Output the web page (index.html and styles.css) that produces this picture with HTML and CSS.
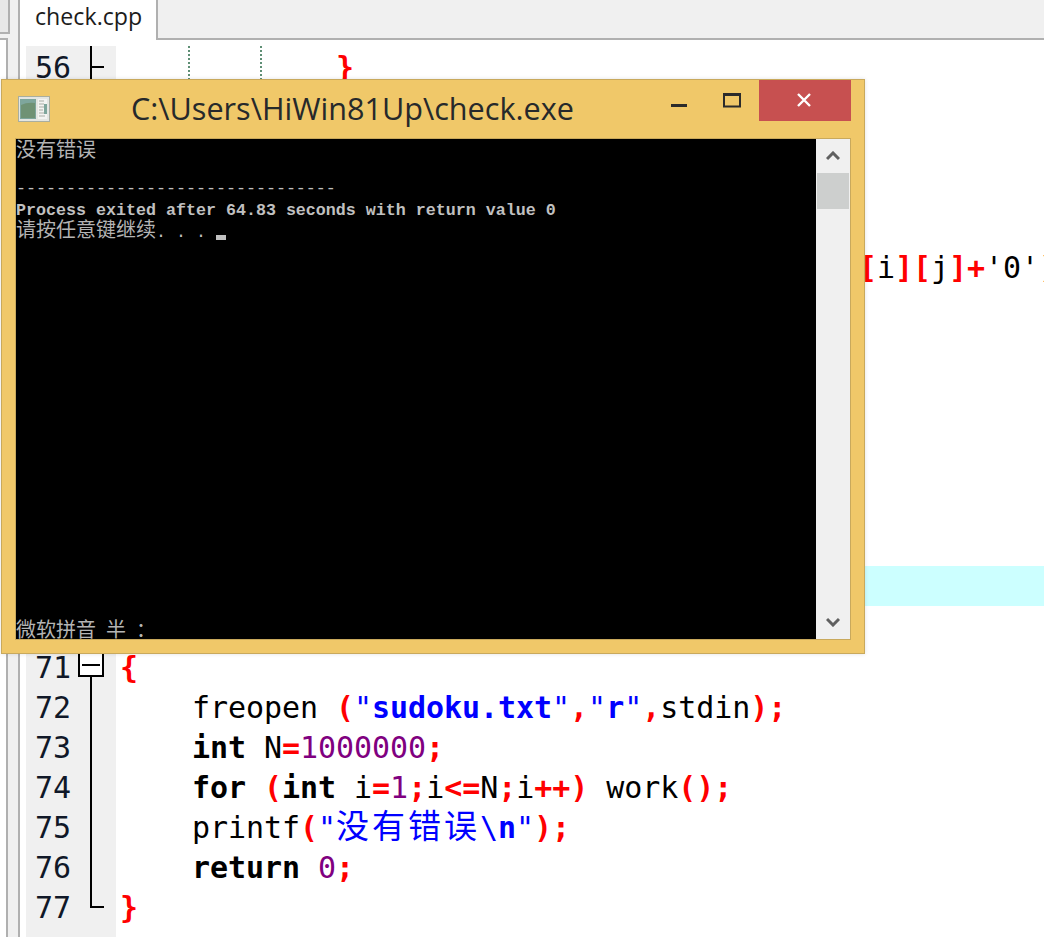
FILE: index.html
```html
<!DOCTYPE html>
<html lang="zh">
<head>
<meta charset="utf-8">
<title>check.cpp</title>
<link rel="stylesheet" href="styles.css">
</head>
<body>
<div class="ide">
  <aside class="left">
    <div class="pane-top"></div>
    <div class="pane-bottom"></div>
  </aside>
  <main class="main">
    <div class="tabbar">
      <div class="tab">check.cpp</div>
      <div class="tab-rest"></div>
    </div>
    <div class="editor">
      <div class="row"><div class="gutter"><span class="num">56</span><span class="fold f-tick"></span></div><div class="code guided"><span class="guide g1"></span><span class="guide g2"></span>            <b class="op">}</b></div></div>
      <div class="row"><div class="gutter"><span class="num">57</span><span class="fold f-line"></span></div><div class="code"></div></div>
      <div class="row"><div class="gutter"><span class="num">58</span><span class="fold f-line"></span></div><div class="code"></div></div>
      <div class="row"><div class="gutter"><span class="num">59</span><span class="fold f-line"></span></div><div class="code"></div></div>
      <div class="row"><div class="gutter"><span class="num">60</span><span class="fold f-line"></span></div><div class="code"></div></div>
      <div class="row"><div class="gutter"><span class="num">61</span><span class="fold f-line"></span></div><div class="code shifted"><b class="op">[</b>i<b class="op">][</b>j<b class="op">]+</b>'0'<b class="op">);</b></div></div>
      <div class="row"><div class="gutter"><span class="num">62</span><span class="fold f-line"></span></div><div class="code"></div></div>
      <div class="row"><div class="gutter"><span class="num">63</span><span class="fold f-line"></span></div><div class="code"></div></div>
      <div class="row"><div class="gutter"><span class="num">64</span><span class="fold f-line"></span></div><div class="code"></div></div>
      <div class="row"><div class="gutter"><span class="num">65</span><span class="fold f-line"></span></div><div class="code"></div></div>
      <div class="row"><div class="gutter"><span class="num">66</span><span class="fold f-line"></span></div><div class="code"></div></div>
      <div class="row"><div class="gutter"><span class="num">67</span><span class="fold f-line"></span></div><div class="code"></div></div>
      <div class="row"><div class="gutter"><span class="num">68</span><span class="fold f-line"></span></div><div class="code"></div></div>
      <div class="row"><div class="gutter"><span class="num">69</span><span class="fold f-line"></span></div><div class="code current"></div></div>
      <div class="row"><div class="gutter"><span class="num">70</span><span class="fold"></span></div><div class="code"></div></div>
      <div class="row"><div class="gutter"><span class="num">71</span><span class="fold f-open"><svg class="fold-box" width="26" height="40" viewBox="0 0 26 40"><rect x="1" y="6" width="24" height="24" fill="#fff" stroke="#000" stroke-width="2"/><path d="M4 19h18" stroke="#000" stroke-width="2"/><path d="M13 31v9" stroke="#000" stroke-width="2"/></svg></span></div><div class="code"><b class="op">{</b></div></div>
      <div class="row"><div class="gutter"><span class="num">72</span><span class="fold f-line"></span></div><div class="code">    freopen <b class="op">(</b><span class="str">"<b>sudoku.txt</b>"</span><b class="op">,</b><span class="str">"<b>r</b>"</span><b class="op">,</b>stdin<b class="op">);</b></div></div>
      <div class="row"><div class="gutter"><span class="num">73</span><span class="fold f-line"></span></div><div class="code">    <b>int</b> N<b class="op">=</b><span class="lit">1000000</span><b class="op">;</b></div></div>
      <div class="row"><div class="gutter"><span class="num">74</span><span class="fold f-line"></span></div><div class="code">    <b>for</b> <b class="op">(</b><b>int</b> i<b class="op">=</b><span class="lit">1</span><b class="op">;</b>i<b class="op">&lt;=</b>N<b class="op">;</b>i<b class="op">++)</b> work<b class="op">();</b></div></div>
      <div class="row"><div class="gutter"><span class="num">75</span><span class="fold f-line"></span></div><div class="code">    printf<b class="op">(</b><span class="str">"<span class="cjk">没有错误</span>\<b>n</b>"</span><b class="op">);</b></div></div>
      <div class="row"><div class="gutter"><span class="num">76</span><span class="fold f-line"></span></div><div class="code">    <b>return</b> <span class="lit">0</span><b class="op">;</b></div></div>
      <div class="row"><div class="gutter"><span class="num">77</span><span class="fold f-end"></span></div><div class="code"><b class="op">}</b></div></div>
      <div class="row"><div class="gutter"></div><div class="code"></div></div>
    </div>
  </main>
</div>

<section class="window">
  <header class="titlebar">
    <svg class="app-icon" width="32" height="26" viewBox="0 0 32 26">
      <rect x="0" y="0" width="32" height="26" fill="#a9ae9f"/>
      <rect x="1" y="1" width="30" height="24" fill="#e4e6e2"/>
      <rect x="2" y="3" width="16" height="20" fill="#7ea69c"/>
      <path d="M3 9q6-3 14-2v15H3z" fill="#6f9274"/>
      <rect x="20" y="3" width="9" height="20" fill="#f3f4f2"/>
      <path d="M21 5h5M21 8h5M21 11h5M21 14h4M21 17h5M21 20h6" stroke="#a9ada6" stroke-width="1"/>
      <rect x="26" y="8" width="3" height="10" fill="#7ea69c"/>
    </svg>
    <h1 class="title">C:\Users\HiWin81Up\check.exe</h1>
    <div class="controls">
      <button class="ctl"><svg width="53" height="41" viewBox="0 0 53 41"><rect x="18" y="24" width="16" height="3" fill="#2b2b2b"/></svg></button>
      <button class="ctl"><svg width="53" height="41" viewBox="0 0 53 41"><path d="M18 14.5h16.000v12H18z" fill="none" stroke="#2b2b2b" stroke-width="2"/><rect x="17" y="13" width="18" height="3" fill="#2b2b2b"/></svg></button>
      <button class="ctl close"><svg width="92" height="41" viewBox="0 0 92 41"><path d="M39 14l12 12M51 14L39 26" stroke="#fff" stroke-width="2.4" fill="none"/></svg></button>
    </div>
  </header>
  <div class="console">
    <div class="term"><div class="line"><span class="zh">没有错误</span></div><div class="line"> </div><div class="line">--------------------------------</div><div class="line strong">Process exited after 64.83 seconds with return value 0</div><div class="line"><span class="zh">请按任意键继续</span>. . . <span class="cursor"></span></div><div class="ime"><span class="zh">微软拼音</span> <span class="zh">半</span> <span class="zh">：</span></div></div>
    <div class="scrollbar">
      <div class="sb-btn"><svg width="14" height="10" viewBox="0 0 14 10"><path d="M1 8l6-6 6 6" fill="none" stroke="#606060" stroke-width="3"/></svg></div>
      <div class="thumb"></div>
      <div class="sb-btn sb-end"><svg width="14" height="10" viewBox="0 0 14 10"><path d="M1 2l6 6 6-6" fill="none" stroke="#606060" stroke-width="3"/></svg></div>
    </div>
  </div>
</section>
</body>
</html>
```
FILE: styles.css
```css
* { box-sizing: border-box; }
html, body { margin: 0; padding: 0; }
body {
  position: relative;
  width: 1044px;
  height: 937px;
  overflow: hidden;
  background: #fff;
  font-family: "Open Sans", "Noto Sans", sans-serif;
}
.ide { display: flex; height: 937px; }

.left {
  width: 20px;
  flex: none;
  display: flex;
  flex-direction: column;
  background: #f0f0f0;
  border-right: 2px solid #b0b0b0;
}
.pane-top {
  width: 10px;
  height: 34px;
  background: #e8e8e8;
  border-right: 2px solid #b0b0b0;
  border-bottom: 2px solid #b0b0b0;
}
.pane-bottom {
  width: 8px;
  flex: 1;
  margin-top: 4px;
  background: #fff;
  border-top: 2px solid #b0b0b0;
  border-right: 2px solid #b0b0b0;
}

.main { flex: 1; min-width: 0; display: flex; flex-direction: column; }
.tabbar { height: 40px; flex: none; display: flex; }
.tab {
  width: 138px;
  padding: 0 0 6px 15px;
  background: #fff;
  border-right: 2px solid #b0b0b0;
  color: #1c1c1c;
  font-size: 23.2px;
  line-height: 32px;
}
.tab-rest { flex: 1; background: #f0f0f0; border-bottom: 2px solid #b0b0b0; }

.editor {
  flex: 1;
  padding: 6px 0 0 6px;
  display: flex;
  flex-direction: column;
  overflow: hidden;
  font-family: "DejaVu Sans Mono", "Noto Sans CJK SC", monospace;
  font-size: 30px;
  letter-spacing: -0.06px;
  color: #000;
}
.row { display: flex; height: 40px; flex: none; }
.gutter { width: 90px; flex: none; display: flex; background: #f0f0f0; color: #101828; }
.num { width: 52px; padding-left: 9px; line-height: 44px; }
.fold { width: 26px; height: 40px; display: block; }
.f-line { background: linear-gradient(#000, #000) 12px 0 / 2px 100% no-repeat; }
.f-tick {
  background:
    linear-gradient(#000, #000) 12px 0 / 2px 100% no-repeat,
    linear-gradient(#000, #000) 12px 20px / 14px 2px no-repeat;
}
.f-end {
  background:
    linear-gradient(#000, #000) 12px 0 / 2px 22px no-repeat,
    linear-gradient(#000, #000) 12px 20px / 14px 2px no-repeat;
}
.fold-box { display: block; }

.code {
  flex: 1;
  min-width: 0;
  padding-left: 4px;
  line-height: 44px;
  white-space: pre;
  overflow: hidden;
}
.code b { font-weight: 700; }
.op { color: #f00; }
.str { color: #00f; }
.lit { color: #800080; }
.cjk { font-size: 33px; letter-spacing: 3px; line-height: 30px; }
.current { background: #ccffff; }
.shifted { padding-left: 743px; }
.guided { position: relative; }
.guide {
  position: absolute;
  top: 0;
  bottom: 0;
  width: 2px;
  background: repeating-linear-gradient(#5f8f75 0 2px, transparent 2px 4px);
}
.g1 { left: 72px; }
.g2 { left: 144px; }

.window {
  position: absolute;
  left: 1px;
  top: 79px;
  width: 864px;
  height: 575px;
  display: flex;
  flex-direction: column;
  background: #f0c869;
  border: 1px solid #c9a95c;
  box-shadow: 0 0 4px rgba(0, 0, 0, 0.12);
}
.titlebar { height: 58px; flex: none; display: flex; align-items: flex-start; }
.app-icon { margin: 16px 0 0 16px; flex: none; }
.title {
  margin: 7px 0 0 81px;
  color: #26292b;
  font-size: 30.6px;
  font-weight: 400;
  line-height: 42px;
  white-space: nowrap;
}
.controls { margin-left: auto; margin-right: 13px; display: flex; }
.ctl { width: 53px; height: 41px; padding: 0; border: 0; background: transparent; display: block; }
.ctl svg { display: block; }
.close { width: 92px; background: #c75050; }

.console {
  height: 502px;
  width: 836px;
  margin-left: 13px;
  display: flex;
  border: 1px solid #c9a95c;
}
.term {
  width: 800px;
  height: 500px;
  flex: none;
  display: flex;
  flex-direction: column;
  background: #000;
  color: #c0c0c0;
  font-family: "Liberation Mono", "Noto Sans CJK SC", monospace;
  font-size: 16.67px;
  white-space: pre;
}
.line { height: 20px; line-height: 20px; }
.strong { font-weight: 700; line-height: 24px; }
.zh { font-family: "Noto Sans CJK SC", sans-serif; font-size: 20px; font-weight: 400; line-height: 20px; color: #b4b4b4; }
.cursor { display: inline-block; width: 10px; height: 5px; background: #c0c0c0; vertical-align: -3px; }
.ime { margin-top: auto; height: 20px; line-height: 20px; }
.scrollbar { flex: 1; display: flex; flex-direction: column; background: #f0f0f0; }
.sb-btn { height: 34px; flex: none; display: flex; align-items: center; justify-content: center; }
.sb-end { margin-top: auto; }
.thumb { height: 36px; margin: 0 1px; background: #cdcfce; }
```
